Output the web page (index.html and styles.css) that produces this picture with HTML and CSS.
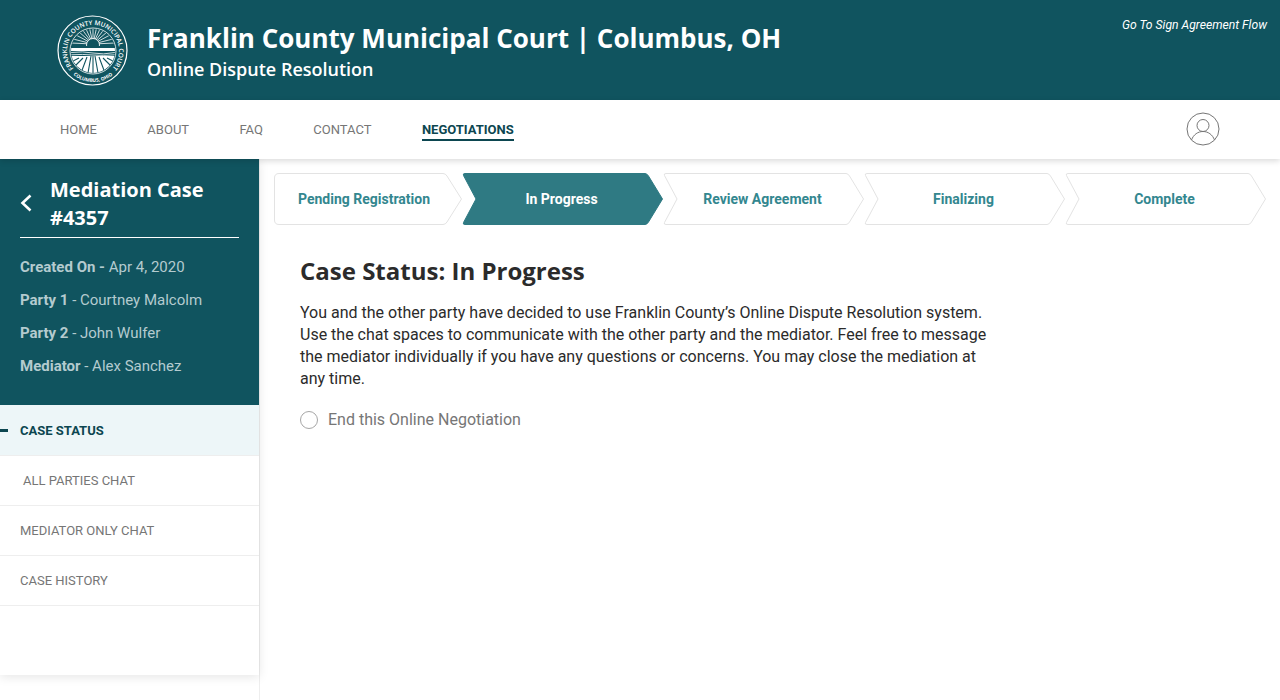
FILE: index.html
```html
<!DOCTYPE html>
<html>
<head>
    <title>Franklin County Municipal Court: Case Status</title>
    <link rel="stylesheet" href="styles.css">
</head>
<body>
    <div class="top-header">
        <svg class="seal" width="72" height="72" viewBox="0 0 72 72">
            <defs>
                <path id="seal-top" d="M36 62 A26 26 0 1 1 36.01 62"/>
                <path id="seal-bottom" d="M5 36 A31 31 0 0 0 67 36"/>
                <clipPath id="seal-inner"><circle cx="36" cy="36" r="22"/></clipPath>
            </defs>
            <circle cx="35.500" cy="35.500" r="34.500" fill="none" stroke="#fff" stroke-width="1.2"/>
            <circle cx="36" cy="36" r="23" fill="none" stroke="#fff" stroke-width=".8"/>
            <text class="seal-text"><textPath href="#seal-top" startOffset="50%" text-anchor="middle">FRANKLIN COUNTY MUNICIPAL COURT</textPath></text>
            <text class="seal-text seal-text-b"><textPath href="#seal-bottom" startOffset="50%" text-anchor="middle">COLUMBUS, OHIO</textPath></text>
            <g clip-path="url(#seal-inner)">
                <g stroke="#fff" stroke-width=".8">
                    <line x1="36" y1="29" x2="36" y2="13"/>
                    <line x1="36" y1="29" x2="39.500" y2="13"/>
                    <line x1="36" y1="29" x2="32.500" y2="13"/>
                    <line x1="36" y1="29" x2="43" y2="14"/>
                    <line x1="36" y1="29" x2="29" y2="14"/>
                    <line x1="36" y1="29" x2="46.500" y2="15"/>
                    <line x1="36" y1="29" x2="25.500" y2="15"/>
                    <line x1="36" y1="29" x2="50" y2="17"/>
                    <line x1="36" y1="29" x2="22" y2="17"/>
                    <line x1="36" y1="29" x2="53" y2="20"/>
                    <line x1="36" y1="29" x2="19" y2="20"/>
                    <line x1="36" y1="29" x2="56" y2="24"/>
                    <line x1="36" y1="29" x2="16" y2="24"/>
                    <line x1="36" y1="29" x2="58" y2="28"/>
                    <line x1="36" y1="29" x2="14" y2="28"/>
                </g>
                <circle cx="36" cy="30" r="6.500" fill="#10545f" stroke="#fff" stroke-width=".9"/>
                <rect x="12" y="31" width="48" height="3" fill="#10545f"/>
                <rect x="12" y="33" width="48" height="3" fill="#fff"/>
                <path d="M12 36 H60 V41 H12 Z" fill="#10545f"/>
                <path d="M14 37.500 Q26 36 36 38 T58 37.500 M14 39.800 Q26 39 36 40 T58 39.800" fill="none" stroke="#fff" stroke-width=".8"/>
                <path d="M12 41 H60 V60 H12 Z" fill="#fff"/>
                <path d="M34 41 L31 58 M38 41 L41 58 M36 41 V58 M30 42 L24 58 M42 42 L48 58 M26 43 L17 52 M46 43 L55 52 M22 43 L14 47 M50 43 L58 47" stroke="#10545f" stroke-width="1.100"/>
            </g>
        </svg>
        <div class="court-title">
            <h1>Franklin County Municipal Court | Columbus, OH</h1>
            <p>Online Dispute Resolution</p>
        </div>
        <a class="flow-link">Go To Sign Agreement Flow</a>
    </div>

    <div class="nav-bar">
        <div class="nav-links">
            <a>HOME</a>
            <a>ABOUT</a>
            <a>FAQ</a>
            <a>CONTACT</a>
            <a class="active">NEGOTIATIONS</a>
        </div>
        <svg class="user-icon" width="34" height="34" viewBox="0 0 34 34" fill="none" stroke="#767676" stroke-width="1">
            <circle cx="17" cy="17" r="16"/>
            <circle cx="17" cy="13.5" r="6"/>
            <path d="M5.5 28 C7.5 22.5 12 19.5 17 19.5 S26.5 22.5 28.5 28"/>
        </svg>
    </div>

    <div class="page">
        <div class="side-col">
            <div class="sidebar">
                <div class="case-box">
                    <div class="case-title">
                        <svg width="14" height="20" viewBox="0 0 14 20" fill="none" stroke="#fff" stroke-width="2.6">
                            <path d="M11.500 1.500 L3.500 9 L11.500 16.500"/>
                        </svg>
                        <h2>Mediation Case #4357</h2>
                    </div>
                    <p><b>Created On -</b> Apr 4, 2020</p>
                    <p><b>Party 1</b> - Courtney Malcolm</p>
                    <p><b>Party 2</b> - John Wulfer</p>
                    <p><b>Mediator</b> - Alex Sanchez</p>
                </div>
                <div class="side-item active">CASE STATUS</div>
                <div class="side-item shifted">ALL PARTIES CHAT</div>
                <div class="side-item">MEDIATOR ONLY CHAT</div>
                <div class="side-item">CASE HISTORY</div>
            </div>
        </div>

        <div class="content">
            <div class="steps">
                <div class="step first">
                    <svg width="188" height="52" viewBox="0 0 188 52"><path class="shape" d="M5 .5 H169 Q171.5 .5 173 3 L187.500 26 L173 49 Q171.500 51.500 169 51.500 H5 Q.5 51.500 .5 47 V5 Q.5 .5 5 .5 Z"/></svg>
                    <span>Pending Registration</span>
                </div>
                <div class="step current">
                    <svg width="201" height="52" viewBox="0 0 201 52"><path class="shape" d="M3 .5 H183 Q185 .5 186.500 3 L200.500 26 L186.500 49 Q185 51.500 183 51.500 H3 Q.5 51.500 1.500 49.500 L14 26 L1.500 2.500 Q.5 .5 3 .5 Z"/></svg>
                    <span>In Progress</span>
                </div>
                <div class="step">
                    <svg width="201" height="52" viewBox="0 0 201 52"><path class="shape" d="M3 .5 H183 Q185 .5 186.500 3 L200.500 26 L186.500 49 Q185 51.500 183 51.500 H3 Q.5 51.500 1.500 49.500 L14 26 L1.500 2.500 Q.5 .5 3 .5 Z"/></svg>
                    <span>Review Agreement</span>
                </div>
                <div class="step">
                    <svg width="201" height="52" viewBox="0 0 201 52"><path class="shape" d="M3 .5 H183 Q185 .5 186.500 3 L200.500 26 L186.500 49 Q185 51.500 183 51.500 H3 Q.5 51.500 1.500 49.500 L14 26 L1.500 2.500 Q.5 .5 3 .5 Z"/></svg>
                    <span>Finalizing</span>
                </div>
                <div class="step">
                    <svg width="201" height="52" viewBox="0 0 201 52"><path class="shape" d="M3 .5 H183 Q185 .5 186.500 3 L200.500 26 L186.500 49 Q185 51.500 183 51.500 H3 Q.5 51.500 1.500 49.500 L14 26 L1.500 2.500 Q.5 .5 3 .5 Z"/></svg>
                    <span>Complete</span>
                </div>
            </div>

            <div class="status">
                <h2>Case Status: In Progress</h2>
                <p>You and the other party have decided to use Franklin County’s Online Dispute Resolution system. Use the chat spaces to communicate with the other party and the mediator. Feel free to message the mediator individually if you have any questions or concerns. You may close the mediation at any time.</p>
                <label class="end-option"><span class="radio"></span>End this Online Negotiation</label>
            </div>
        </div>
    </div>
</body>
</html>
```

FILE: styles.css
```css
* {
    box-sizing: border-box;
}
html, body {
    height: 100%;
}
body {
    margin: 0;
    font-family: Roboto, Arial, sans-serif;
    background-color: white;
    overflow: hidden;
}
.top-header {
    display: flex;
    align-items: flex-start;
    height: 100px;
    padding: 15px 13px 0 57px;
    background-color: #10545f;
    color: white;
}
.seal-text {
    font-family: "Open Sans", sans-serif;
    font-size: 6.4px;
    font-weight: 600;
    fill: white;
}
.seal-text-b {
    font-size: 4.8px;
    font-weight: 700;
}
.court-title {
    margin-left: 18px;
    padding-top: 5px;
    font-family: "Open Sans", sans-serif;
}
.court-title h1 {
    margin: 0;
    font-size: 26px;
    font-weight: 700;
    line-height: 36px;
}
.court-title p {
    margin: 0;
    font-size: 18px;
    font-weight: 600;
    line-height: 26px;
}
.flow-link {
    margin-left: auto;
    padding-top: 3px;
    font-size: 12.15px;
    font-style: italic;
}
.nav-bar {
    position: relative;
    z-index: 2;
    display: flex;
    align-items: center;
    justify-content: space-between;
    height: 59px;
    padding: 0 60px;
    background-color: white;
    box-shadow: 0 2px 6px rgba(0, 0, 0, 0.15);
}
.nav-links {
    display: flex;
    gap: 50.4px;
    margin-top: 3px;
    font-size: 13px;
    color: #767676;
}
.nav-links a {
    line-height: 18px;
    border-bottom: 2px solid transparent;
}
.nav-links a.active {
    color: #0c4650;
    font-weight: 700;
    border-bottom-color: #0c4650;
}
.user-icon {
    margin-top: -1px;
}
.page {
    display: flex;
    height: 541px;
}
.side-col {
    flex: none;
    width: 260px;
    border-right: 1px solid #eeeeee;
}
.sidebar {
    width: 259px;
    height: 516px;
    background-color: white;
    box-shadow: 0 2px 10px rgba(0, 0, 0, 0.1);
}
.case-box {
    height: 246px;
    padding: 17px 20px 0;
    background-color: #10545f;
    color: #b4cbcf;
    font-size: 15px;
}
.case-title {
    display: flex;
    align-items: center;
    margin-bottom: 13px;
    padding-bottom: 5px;
    border-bottom: 1px solid white;
}
.case-title svg {
    flex: none;
    margin: 0 17px 0 -1px;
}
.case-title h2 {
    margin: 0;
    font-family: "Open Sans", sans-serif;
    font-size: 20px;
    font-weight: 700;
    line-height: 28px;
    color: white;
}
.case-box p {
    margin: 0;
    line-height: 33px;
}
.side-item {
    display: flex;
    align-items: center;
    height: 50px;
    padding-left: 20px;
    font-size: 13px;
    color: #767676;
    border-bottom: 1px solid #eeeeee;
}
.side-item.shifted {
    padding-left: 23px;
}
.side-item.active {
    position: relative;
    height: 51px;
    background-color: #edf6f8;
    color: #0c4650;
    font-weight: 700;
}
.side-item.active::before {
    content: "";
    position: absolute;
    left: 0;
    top: 24px;
    width: 8px;
    height: 3px;
    background-color: #0c4650;
}
.content {
    flex: 1;
    padding: 14px 14px 0;
}
.steps {
    display: flex;
}
.step {
    display: grid;
    place-items: center;
    height: 52px;
    font-size: 14px;
    font-weight: 700;
    color: #33878f;
}
.step svg, .step span {
    grid-area: 1 / 1;
}
.step svg {
    display: block;
}
.step span {
    position: relative;
    left: -1px;
}
.step.first span {
    left: -4px;
}
.step .shape {
    fill: white;
    stroke: #e3e3e3;
}
.step.current .shape {
    fill: #2f7a83;
    stroke: #2f7a83;
}
.step.current {
    color: white;
}
.status {
    width: 726px;
    padding: 30px 0 0 26px;
    color: #2b2b2b;
}
.status h2 {
    margin: 0 0 15px;
    font-family: "Open Sans", sans-serif;
    font-size: 24px;
    font-weight: 700;
    line-height: 32px;
}
.status p {
    margin: 0;
    font-size: 16px;
    line-height: 22px;
}
.end-option {
    display: flex;
    align-items: center;
    gap: 10px;
    margin-top: 19px;
    font-size: 16px;
    line-height: 22px;
    color: #767676;
}
.radio {
    width: 18px;
    height: 18px;
    border: 1px solid #a6a6a6;
    border-radius: 50%;
}
```
